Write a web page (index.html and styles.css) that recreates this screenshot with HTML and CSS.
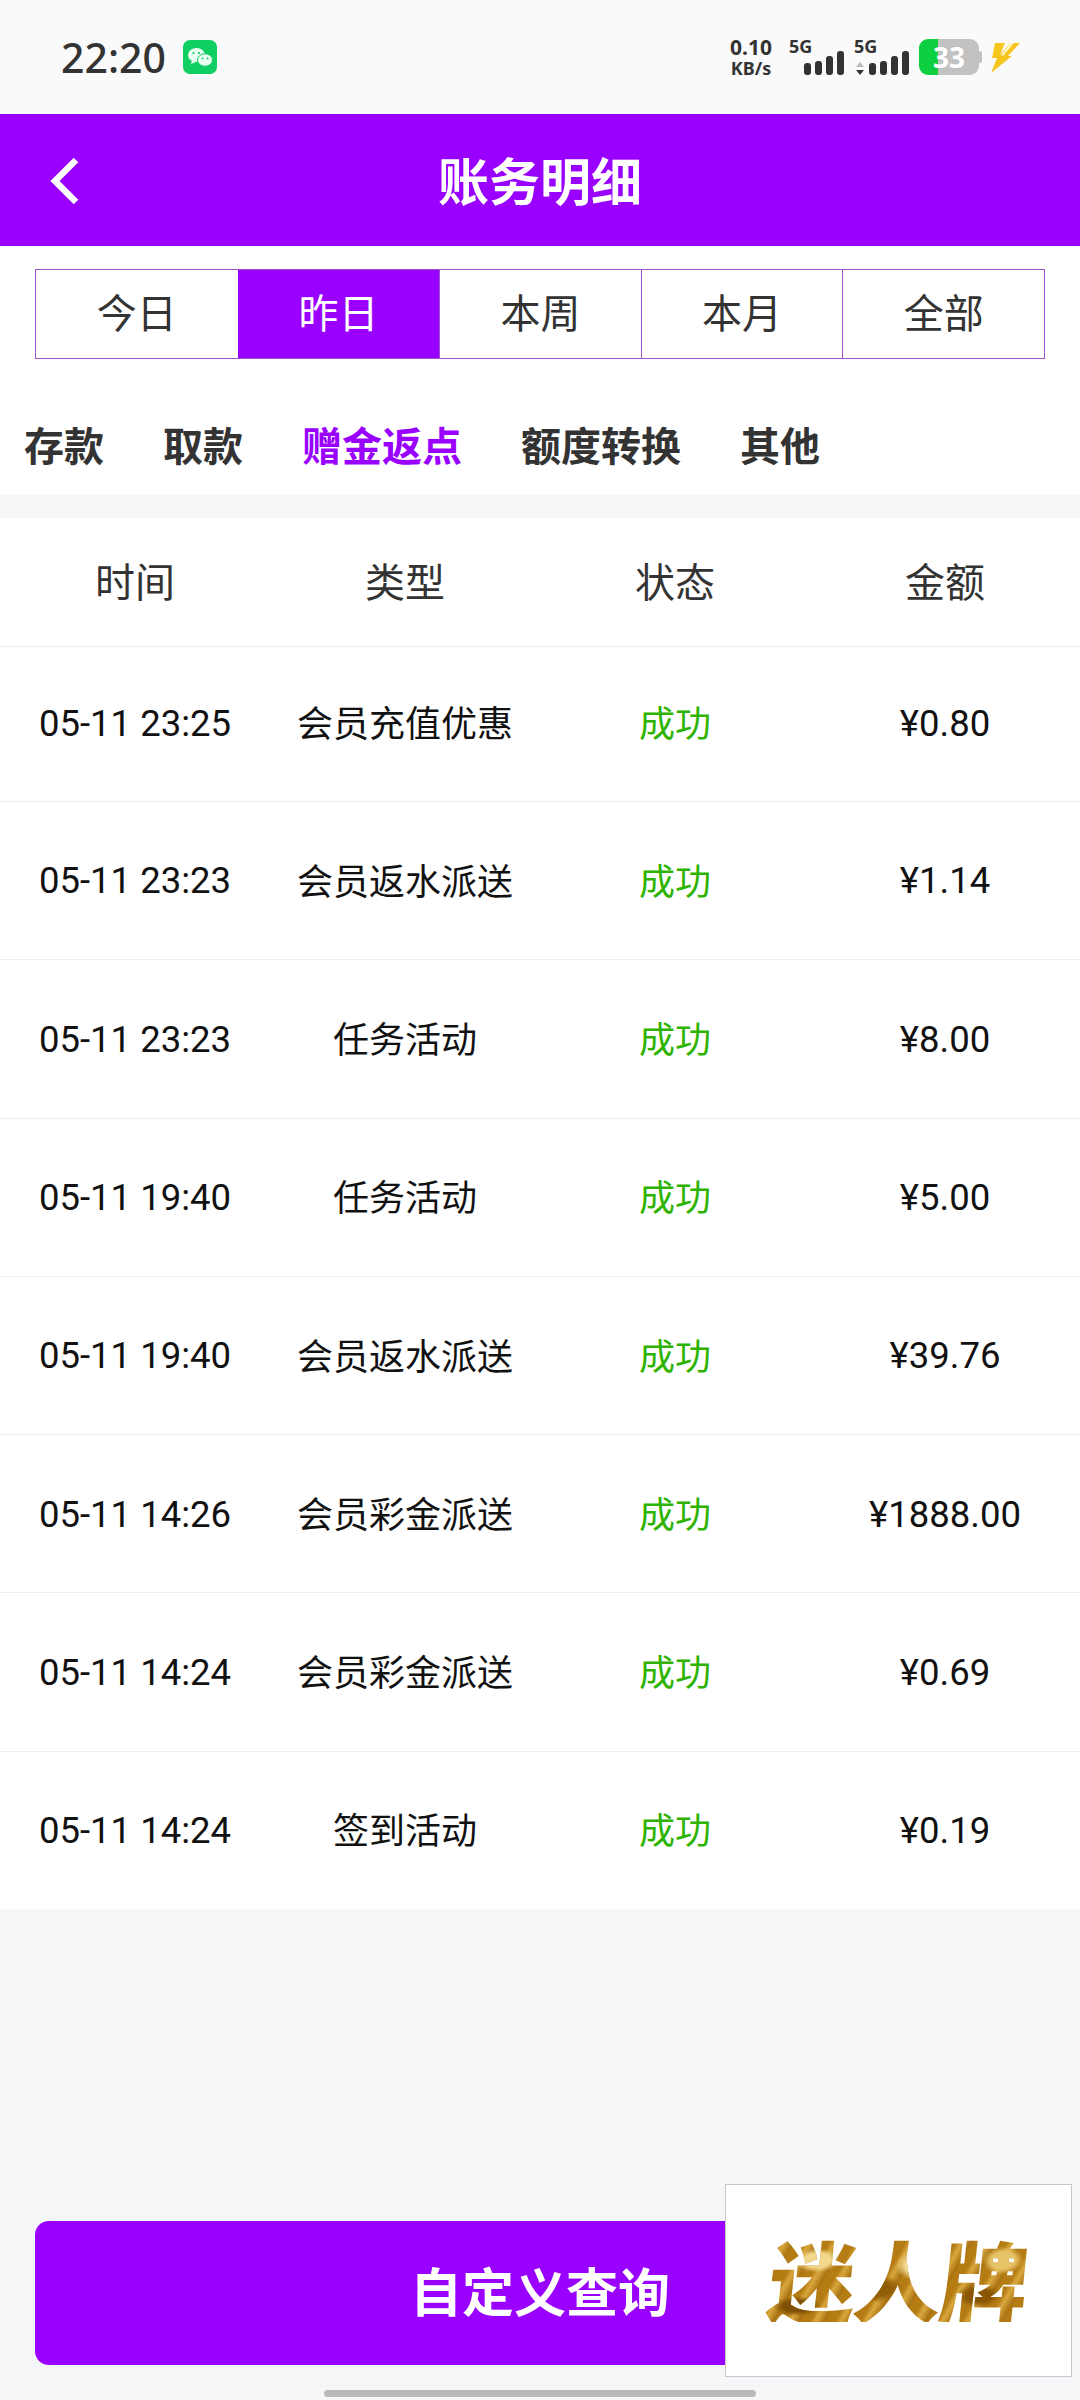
FILE: index.html
```html
<!DOCTYPE html>
<html lang="zh">
<head>
<meta charset="utf-8">
<title>账务明细</title>
<link rel="stylesheet" href="styles.css">
</head>
<body>
<div class="page">
  <div class="status">
    <div class="status-left">
      <span class="clock">22:20</span>
      <span class="wechat">
        <svg viewBox="0 0 34 34" width="34" height="34"><rect width="34" height="34" rx="7" fill="#0fce62"/><ellipse cx="13.5" cy="15" rx="8.5" ry="7" fill="#e8fff1"/><path d="M9 20l-1 4 5-2z" fill="#e8fff1"/><ellipse cx="22" cy="20" rx="7.5" ry="6.3" fill="#e8fff1" stroke="#0fce62" stroke-width="1"/><circle cx="10.500" cy="13" r="1.100" fill="#0fce62"/><circle cx="16" cy="13" r="1.100" fill="#0fce62"/><circle cx="19.500" cy="18.500" r="1" fill="#0fce62"/><circle cx="24.500" cy="18.500" r="1" fill="#0fce62"/></svg>
      </span>
    </div>
    <div class="status-right">
      <div class="speed"><span class="speed-val">0.10</span><span class="speed-unit">KB/s</span></div>
      <div class="signal">
        <span class="net">5G</span>
        <div class="bars"><i class="b1"></i><i class="b2"></i><i class="b3"></i><i class="b4"></i></div>
      </div>
      <div class="signal">
        <span class="net">5G</span>
        <div class="bars"><svg class="updown" viewBox="0 0 8 13" width="8" height="13"><path d="M4 0l4 5H0z" fill="#bbb"/><path d="M4 13l4-5H0z" fill="#333"/></svg><i class="b1"></i><i class="b2"></i><i class="b3"></i><i class="b4"></i></div>
      </div>
      <div class="battery"><span class="battery-num">33</span></div>
      <svg class="bolt" viewBox="0 0 30 31" width="30" height="31"><path d="M5 1h10L10 13 20 1h10L18 14h4L1 31l6-15H2z" fill="#f6c61f"/><path d="M11 13l9-12h4L13 14z" fill="#fff3b8"/></svg>
    </div>
  </div>

  <header class="topbar">
    <svg class="back" viewBox="0 0 30 48" width="30" height="48"><path d="M26 3L5 24l21 21" fill="none" stroke="#fff" stroke-width="6.500"/></svg>
    <h1 class="title">账务明细</h1>
  </header>

  <section class="filters">
    <div class="range">
      <div class="range-item">今日</div>
      <div class="range-item on">昨日</div>
      <div class="range-item">本周</div>
      <div class="range-item">本月</div>
      <div class="range-item">全部</div>
    </div>
    <nav class="kinds">
      <span>存款</span>
      <span>取款</span>
      <span class="on">赠金返点</span>
      <span>额度转换</span>
      <span>其他</span>
    </nav>
  </section>

  <section class="table">
    <div class="row head"><span>时间</span><span>类型</span><span>状态</span><span>金额</span></div>
    <div class="row first"><span class="num">05-11 23:25</span><span>会员充值优惠</span><span class="ok">成功</span><span class="num">¥0.80</span></div>
    <div class="row"><span class="num">05-11 23:23</span><span>会员返水派送</span><span class="ok">成功</span><span class="num">¥1.14</span></div>
    <div class="row"><span class="num">05-11 23:23</span><span>任务活动</span><span class="ok">成功</span><span class="num">¥8.00</span></div>
    <div class="row"><span class="num">05-11 19:40</span><span>任务活动</span><span class="ok">成功</span><span class="num">¥5.00</span></div>
    <div class="row"><span class="num">05-11 19:40</span><span>会员返水派送</span><span class="ok">成功</span><span class="num">¥39.76</span></div>
    <div class="row"><span class="num">05-11 14:26</span><span>会员彩金派送</span><span class="ok">成功</span><span class="num">¥1888.00</span></div>
    <div class="row"><span class="num">05-11 14:24</span><span>会员彩金派送</span><span class="ok">成功</span><span class="num">¥0.69</span></div>
    <div class="row"><span class="num">05-11 14:24</span><span>签到活动</span><span class="ok">成功</span><span class="num">¥0.19</span></div>
  </section>

  <div class="footer">
    <button class="query">自定义查询</button>
  </div>
  <div class="float-ad"><span class="gold">迷人牌</span></div>
  <div class="home-bar"></div>
</div>
</body>
</html>
```
FILE: styles.css
```css
* { box-sizing: border-box; }
html, body { margin: 0; padding: 0; }
body { font-family: Roboto, "Noto Sans CJK SC", sans-serif; color: #333; background: #f5f6f8; }
.page { position: relative; width: 1080px; height: 2400px; display: flex; flex-direction: column; background: #f5f6f8; overflow: hidden; }

.status { height: 114px; flex: none; background: #fafafa; display: flex; justify-content: space-between; align-items: center; padding: 0 60px 0 61px; }
.status-left { display: flex; align-items: center; gap: 17px; }
.clock { font-family: "Noto Sans", sans-serif; font-size: 41px; font-weight: 500; color: #333; line-height: 1; }
.wechat { display: flex; width: 34px; height: 34px; }
.status-right { display: flex; align-items: center; }
.speed { display: flex; flex-direction: column; align-items: center; width: 44px; font-family: "Noto Sans", sans-serif; font-weight: 700; color: #333; margin-right: 16px; }
.speed-val { font-size: 21px; line-height: 21px; }
.speed-unit { font-size: 18px; line-height: 20px; }
.signal { position: relative; width: 55px; height: 36px; margin-right: 10px; }
.net { position: absolute; left: 0; top: -2px; font: 700 18px/18px "Noto Sans", sans-serif; color: #333; }
.bars { position: absolute; right: 0; bottom: 0; display: flex; align-items: flex-end; gap: 4px; }
.bars i { display: block; width: 7px; background: #333; border-radius: 3px; }
.bars .b1 { height: 12px; }
.bars .b2 { height: 14px; }
.bars .b3 { height: 19px; }
.bars .b4 { height: 24px; }
.updown { margin-right: 1px; }
.battery { position: relative; width: 60px; height: 36px; border-radius: 9px; background: linear-gradient(90deg, #0cd03f 19px, #c2c2c2 19px); display: flex; align-items: center; justify-content: center; }
.battery::after { content: ""; position: absolute; right: -3px; top: 12px; width: 3px; height: 12px; border-radius: 0 2px 2px 0; background: #c2c2c2; }
.battery-num { font: 700 28px/1 "Noto Sans", sans-serif; color: #fff; }
.bolt { margin-left: 11px; }

.topbar { position: relative; height: 132px; flex: none; background: #9900ff; display: flex; align-items: center; justify-content: center; padding-bottom: 2px; }
.back { position: absolute; left: 50px; top: 43px; }
.title { margin: 0; font: 700 51px/1 "Noto Sans CJK SC", sans-serif; color: #fff; }

.filters { background: #fff; height: 249px; flex: none; padding: 23px 35px 0; }
.range { display: grid; grid-template-columns: repeat(5, 1fr); height: 90px; border: 1px solid #a04fcf; }
.range-item { display: flex; align-items: center; justify-content: center; padding-bottom: 7px; font: 400 40px/1 "Noto Sans CJK SC", sans-serif; color: #333; border-left: 1px solid #a04fcf; }
.range-item:first-child { border-left: 0; }
.range-item.on { background: #9900ff; color: #fff; border-left: 0; }
.kinds { display: flex; gap: 59px; margin: 61px 0 0 -11px; font: 700 40px/1.2 "Noto Sans CJK SC", sans-serif; color: #333; }
.kinds .on { color: #9900ff; }

.table { margin-top: 23px; background: #fff; flex: none; }
.row { display: grid; grid-template-columns: repeat(4, 270px); height: 158.300px; padding-top: 2px; align-items: center; text-align: center; border-top: 1px solid #eee; font: 400 36px/1 "Noto Sans CJK SC", sans-serif; color: #111; }
.row > span { padding-bottom: 6px; }
.row > .num { padding-bottom: 0; font: 400 36.5px/1 Roboto, sans-serif; }
.row.first { height: 155px; padding-top: 0; }
.row.head { height: 128px; border-top: 0; font-size: 40px; color: #333; padding-top: 2px; }
.row .ok { color: #2eb300; }

.footer { position: absolute; left: 35px; right: 35px; top: 2221px; }
.query { display: block; width: 100%; height: 144px; background: #9900ff; color: #fff; border: 0; border-radius: 14px; font: 700 52px/1 "Noto Sans CJK SC", sans-serif; padding: 0 0 7px; }
.float-ad { position: absolute; left: 725px; top: 2184px; width: 347px; height: 193px; background: #fff; border: 1px solid #c6c7cb; display: flex; align-items: center; justify-content: center; padding-bottom: 6px; }
.gold { font: 900 88px/1 "Noto Sans CJK SC", sans-serif; transform: skewX(-6deg); background-color: #c08a20; background-image: radial-gradient(ellipse 22px 12px at 18% 30%, #f2d88c 0 60%, transparent 100%), radial-gradient(ellipse 26px 14px at 42% 62%, #8f5c08 0 55%, transparent 100%), radial-gradient(ellipse 24px 16px at 58% 35%, #f4dc98 0 60%, transparent 100%), radial-gradient(ellipse 22px 12px at 82% 70%, #8a5606 0 55%, transparent 100%), radial-gradient(ellipse 20px 14px at 90% 30%, #e8c468 0 60%, transparent 100%), radial-gradient(ellipse 24px 10px at 12% 82%, #7f5005 0 55%, transparent 100%), repeating-linear-gradient(115deg, #b57c14 0 9px, #d9a83f 14px, #a56e0d 23px); -webkit-background-clip: text; background-clip: text; color: transparent; letter-spacing: -2px; }
.home-bar { position: absolute; left: 324px; top: 2390px; width: 432px; height: 7px; border-radius: 4px; background: #b8b9b9; }
```
